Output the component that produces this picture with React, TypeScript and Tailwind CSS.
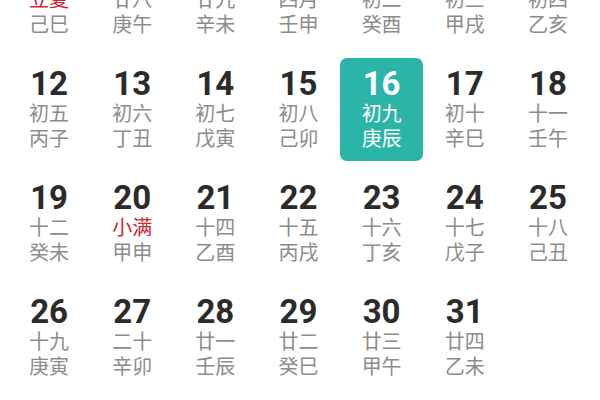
import React from "react";

type Day = { n: number; l: string; g: string; red?: boolean };

const rows: Day[][] = [
  [
    { n: 5, l: "立夏", g: "己巳", red: true },
    { n: 6, l: "廿八", g: "庚午" },
    { n: 7, l: "廿九", g: "辛未" },
    { n: 8, l: "四月", g: "壬申" },
    { n: 9, l: "初二", g: "癸酉" },
    { n: 10, l: "初三", g: "甲戌" },
    { n: 11, l: "初四", g: "乙亥" },
  ],
  [
    { n: 12, l: "初五", g: "丙子" },
    { n: 13, l: "初六", g: "丁丑" },
    { n: 14, l: "初七", g: "戊寅" },
    { n: 15, l: "初八", g: "己卯" },
    { n: 16, l: "初九", g: "庚辰" },
    { n: 17, l: "初十", g: "辛巳" },
    { n: 18, l: "十一", g: "壬午" },
  ],
  [
    { n: 19, l: "十二", g: "癸未" },
    { n: 20, l: "小满", g: "甲申", red: true },
    { n: 21, l: "十四", g: "乙酉" },
    { n: 22, l: "十五", g: "丙戌" },
    { n: 23, l: "十六", g: "丁亥" },
    { n: 24, l: "十七", g: "戊子" },
    { n: 25, l: "十八", g: "己丑" },
  ],
  [
    { n: 26, l: "十九", g: "庚寅" },
    { n: 27, l: "二十", g: "辛卯" },
    { n: 28, l: "廿一", g: "壬辰" },
    { n: 29, l: "廿二", g: "癸巳" },
    { n: 30, l: "廿三", g: "甲午" },
    { n: 31, l: "廿四", g: "乙未" },
  ],
];

export default function App() {
  return (
    <div className="w-[600px] h-[400px] overflow-hidden bg-white">
      <div className="ml-[7.5px] mt-[-56px] w-[582px] grid grid-cols-7 gap-y-[11px]">
        {rows.flat().map((d) => {
          const sel = d.n === 16;
          return (
            <div
              key={d.n}
              className={
                "h-[103px] flex flex-col items-center pt-[10px] rounded-[7px] " +
                (sel ? "bg-[#2bb5a6]" : "")
              }
            >
              <div
                className={
                  "text-[33px] leading-[32px] font-bold " +
                  (sel ? "text-white" : "text-[#2b2b2b]")
                }
                style={{ fontFamily: "Roboto, 'Noto Sans', sans-serif" }}
              >
                {d.n}
              </div>
              <div
                className={
                  "text-[20px] leading-[25px] " +
                  (sel ? "text-white" : d.red ? "text-[#d0252f]" : "text-[#8c8c8c]")
                }
                style={{ fontFamily: "'Noto Sans CJK SC', sans-serif" }}
              >
                {d.l}
              </div>
              <div
                className={
                  "text-[20px] leading-[25px] " + (sel ? "text-white" : "text-[#8c8c8c]")
                }
                style={{ fontFamily: "'Noto Sans CJK SC', sans-serif" }}
              >
                {d.g}
              </div>
            </div>
          );
        })}
      </div>
    </div>
  );
}
